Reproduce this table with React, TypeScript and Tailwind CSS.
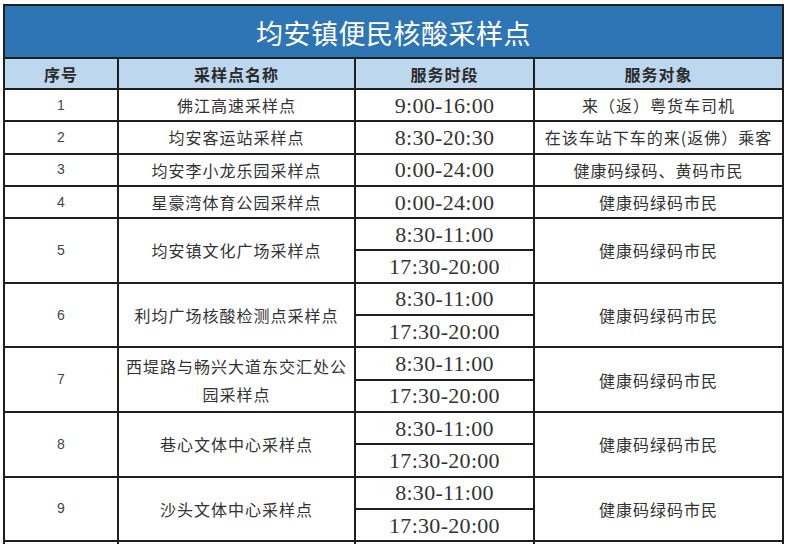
const cjk = "font-['Noto_Sans_CJK_SC',sans-serif]"
const serif = "font-['Liberation_Serif','Times_New_Roman',serif]"

type Site = {
  no: number
  name: React.ReactNode
  times: string[]
  target: string
}

const sites: Site[] = [
  { no: 1, name: "佛江高速采样点", times: ["9:00-16:00"], target: "来（返）粤货车司机" },
  { no: 2, name: "均安客运站采样点", times: ["8:30-20:30"], target: "在该车站下车的来(返佛）乘客" },
  { no: 3, name: "均安李小龙乐园采样点", times: ["0:00-24:00"], target: "健康码绿码、黄码市民" },
  { no: 4, name: "星豪湾体育公园采样点", times: ["0:00-24:00"], target: "健康码绿码市民" },
  { no: 5, name: "均安镇文化广场采样点", times: ["8:30-11:00", "17:30-20:00"], target: "健康码绿码市民" },
  { no: 6, name: "利均广场核酸检测点采样点", times: ["8:30-11:00", "17:30-20:00"], target: "健康码绿码市民" },
  {
    no: 7,
    name: (
      <>
        西堤路与畅兴大道东交汇处公
        <br />
        园采样点
      </>
    ),
    times: ["8:30-11:00", "17:30-20:00"],
    target: "健康码绿码市民",
  },
  { no: 8, name: "巷心文体中心采样点", times: ["8:30-11:00", "17:30-20:00"], target: "健康码绿码市民" },
  { no: 9, name: "沙头文体中心采样点", times: ["8:30-11:00", "17:30-20:00"], target: "健康码绿码市民" },
]

const cell = "flex items-center justify-center bg-white text-center text-[#333]"

export default function App() {
  return (
    <div className="h-[544px] overflow-hidden bg-white">
      <div className="ml-[3px] mt-[4px] grid w-[781px] grid-cols-[112px_235px_177px_247px] grid-rows-[51px_29px_repeat(14,30.3px)_30px] gap-[2px] bg-[#1e1e1e] p-[2px]">
        <div className={`col-span-4 flex items-center justify-center bg-[#2e75b6] pt-[3px] text-[27px] tracking-[0.5px] text-white ${cjk}`}>
          均安镇便民核酸采样点
        </div>

        {["序号", "采样点名称", "服务时段", "服务对象"].map((h) => (
          <div key={h} className={`flex items-center justify-center bg-[#bdd7ee] text-[16px] font-bold tracking-[1px] text-[#2b2b2b] ${cjk}`}>
            {h}
          </div>
        ))}

        {sites.map((s) => {
          const span = s.times.length > 1 ? "row-span-2" : ""
          return [
            <div key={`${s.no}-n`} className={`${cell} ${span} font-['Liberation_Sans',sans-serif] text-[14px] text-[#444]`}>
              {s.no}
            </div>,
            <div key={`${s.no}-m`} className={`${cell} ${span} ${cjk} text-[16px] leading-[28px] tracking-[1px]`}>
              <span>{s.name}</span>
            </div>,
            <div key={`${s.no}-t0`} className={`${cell} ${serif} text-[22px] tracking-[0.3px]`}>
              {s.times[0]}
            </div>,
            <div key={`${s.no}-g`} className={`${cell} ${span} ${cjk} text-[16px] tracking-[1px]`}>
              {s.target}
            </div>,
            s.times[1] ? (
              <div key={`${s.no}-t1`} className={`${cell} ${serif} text-[22px] tracking-[0.3px]`}>
                {s.times[1]}
              </div>
            ) : null,
          ]
        })}

        {Array.from({ length: 4 }, (_, i) => (
          <div key={`blank-${i}`} className="bg-white" />
        ))}
      </div>
    </div>
  )
}
